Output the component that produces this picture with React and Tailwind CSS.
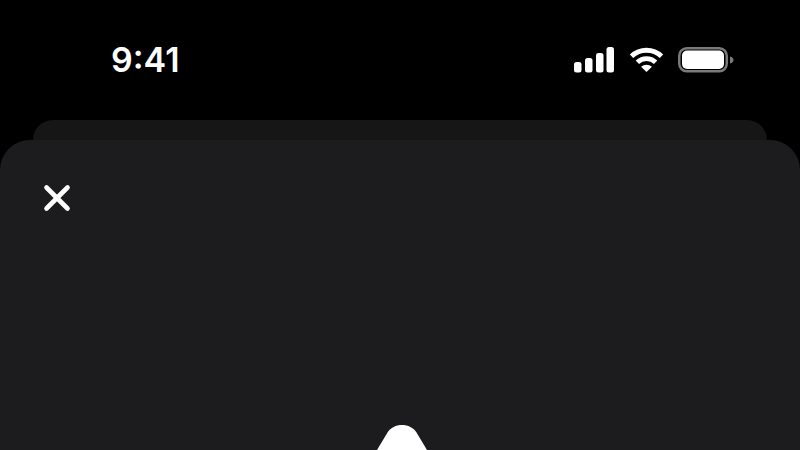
const SignalIcon = () => (
  <svg width="40" height="26" viewBox="0 0 40 26" fill="#fff">
    <rect x="0" y="15" width="7.5" height="10.5" rx="2.5" />
    <rect x="11" y="11" width="7.5" height="14.5" rx="2.5" />
    <rect x="22" y="6" width="7.5" height="19.5" rx="2.5" />
    <rect x="32.5" y="0" width="7.5" height="25.5" rx="2.5" />
  </svg>
);

const WifiIcon = () => (
  <svg width="35" height="26" viewBox="0 0 36 26" fill="none" stroke="#fff" strokeWidth="5">
    <path d="M2.6 9.2C11.2 0.9 24.8 0.9 33.4 9.2" />
    <path d="M8.6 15.4C14 10.4 22 10.4 27.4 15.4" />
    <path d="M18 25.4L12.4 20C15.6 17.2 20.4 17.2 23.6 20Z" fill="#fff" stroke="none" />
  </svg>
);

const BatteryIcon = () => (
  <svg width="56" height="26" viewBox="0 0 56 26" fill="none">
    <rect x="1.25" y="1.25" width="47.5" height="23" rx="7.5" stroke="#7a7a7a" strokeWidth="2.5" />
    <rect x="4" y="3.5" width="42" height="18.5" rx="5" fill="#fff" />
    <path d="M52 9.5C54 10 55.5 11.3 55.5 13C55.5 14.7 54 16 52 16.5Z" fill="#7a7a7a" />
  </svg>
);

const CloseIcon = () => (
  <svg width="30" height="30" viewBox="0 0 30 30" fill="none" stroke="#fff" strokeWidth="4.6" strokeLinecap="round">
    <path d="M4.5 4.5L25.5 25.5" />
    <path d="M25.5 4.5L4.5 25.5" />
  </svg>
);

const Peak = () => (
  <svg width="60" height="25" viewBox="0 0 60 25" fill="#fff" className="block">
    <path d="M5 25L15.5 7.5C18.6 2.6 24 0 30 0C36 0 41.4 2.6 44.5 7.5L55 25Z" />
  </svg>
);

export default function App() {
  return (
    <div className="flex h-[450px] w-[800px] flex-col overflow-hidden bg-black font-['Inter',sans-serif]">
      <div className="flex h-[120px] shrink-0 items-start justify-between pl-[111px] pr-[66px] pt-[39px]">
        <span className="text-[34px] font-semibold leading-[42px] text-white">9:41</span>
        <div className="flex items-center gap-[14.5px] pt-[8px]">
          <SignalIcon />
          <WifiIcon />
          <BatteryIcon />
        </div>
      </div>
      <div className="mx-[33px] h-[20px] shrink-0 rounded-t-[22px] bg-[#161617]" />
      <div className="flex flex-1 flex-col justify-between rounded-t-[30px] bg-[#1c1c1e]">
        <div className="pl-[42px] pt-[43px]">
          <CloseIcon />
        </div>
        <div className="flex justify-center pl-[3px]">
          <Peak />
        </div>
      </div>
    </div>
  );
}
